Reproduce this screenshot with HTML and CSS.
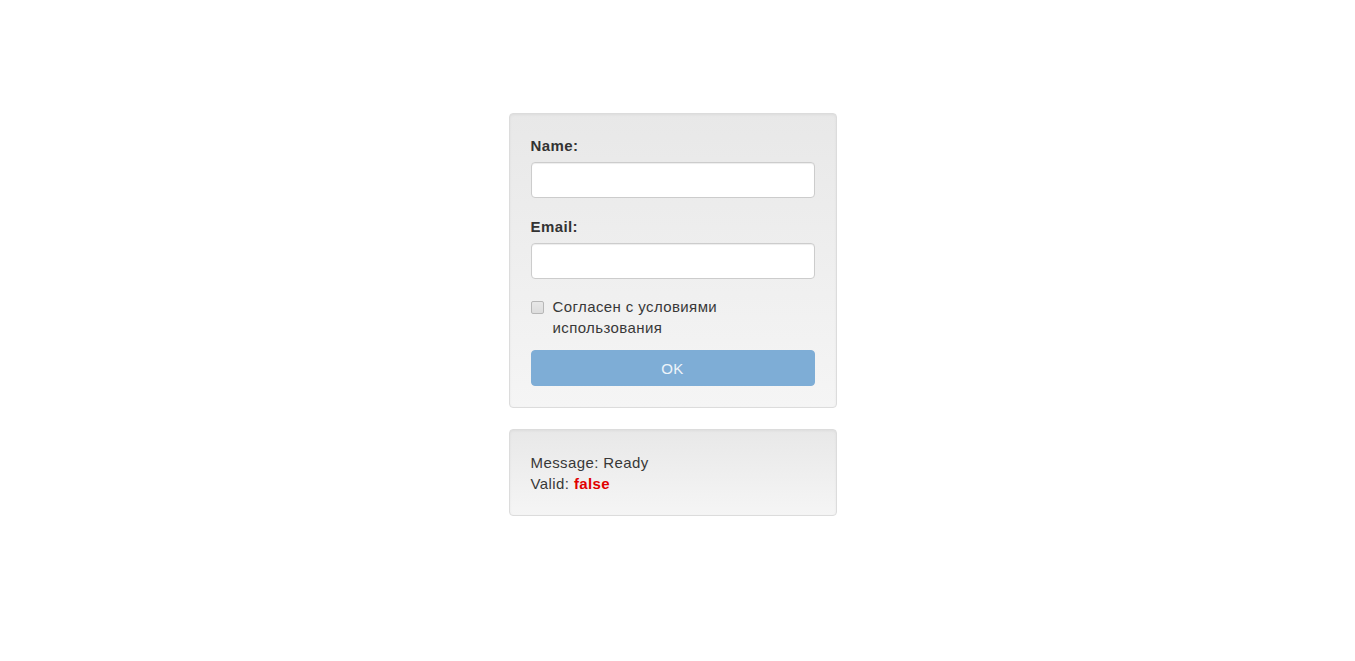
FILE: index.html
```html
<!DOCTYPE html>
<html lang="ru">
<head>
<meta charset="utf-8">
<title>Form</title>
<link rel="stylesheet" href="styles.css">
</head>
<body>
<div class="page">
  <div class="column">
    <form class="well form-well">
      <div class="form-group">
        <label class="label" for="name">Name:</label>
        <input class="input" id="name" type="text">
      </div>
      <div class="form-group form-group-last">
        <label class="label" for="email">Email:</label>
        <input class="input" id="email" type="text">
      </div>
      <div class="check-row">
        <span class="checkbox"></span>
        <span class="check-text">Согласен с условиями использования</span>
      </div>
      <button class="btn" type="button" disabled>OK</button>
    </form>
    <div class="well status-well">
      <div class="line">Message: Ready</div>
      <div class="line">Valid: <span class="invalid">false</span></div>
    </div>
  </div>
</div>
</body>
</html>
```

FILE: styles.css
```css
* { box-sizing: border-box; }
html, body { margin: 0; padding: 0; background: #fff; }
body {
  font-family: "Liberation Sans", Arial, sans-serif;
  font-size: 15px;
  line-height: 21px;
  color: #383838;
  letter-spacing: 0.4px;
}
.page {
  display: flex;
  justify-content: center;
  padding-top: 113px;
}
.column {
  width: 328px;
  margin-left: -10px;
  display: flex;
  flex-direction: column;
  gap: 21px;
}
.well {
  border: 1px solid #dcdcdc;
  border-radius: 4px;
  background: linear-gradient(to bottom, #e8e8e8 0, #f5f5f5 100%);
  box-shadow: inset 0 1px 3px rgba(0,0,0,.05), 0 1px 0 rgba(255,255,255,.1);
}
.form-well {
  margin: 0;
  padding: 21px 21px 21px 21px;
  display: flex;
  flex-direction: column;
}
.form-group {
  display: flex;
  flex-direction: column;
  margin-bottom: 18px;
}
.form-group-last {
  margin-bottom: 17px;
}
.label {
  font-weight: bold;
  line-height: 21px;
  margin-bottom: 6px;
  color: #333;
  letter-spacing: 0.4px;
}
.input {
  height: 36px;
  width: 100%;
  border: 1px solid #ccc;
  border-radius: 4px;
  background: #fff;
  box-shadow: inset 0 1px 1px rgba(0,0,0,.075);
  font: inherit;
  padding: 6px 12px;
  margin: 0;
}
.check-row {
  display: flex;
  align-items: flex-start;
  margin-bottom: 12px;
}
.checkbox {
  flex: none;
  width: 13px;
  height: 13px;
  margin: 5px 9px 0 0;
  border: 1px solid #a9a9a9;
  border-radius: 2px;
  background: linear-gradient(to bottom, #e6e6e6, #d8d8d8);
  opacity: 0.8;
}
.check-text {
  width: 200px;
}
.btn {
  height: 36px;
  width: 100%;
  border: 1px solid #7eadd6;
  border-radius: 4px;
  background: #7eadd6;
  color: #eef4fa;
  font-family: "Liberation Sans", Arial, sans-serif;
  font-size: 15px;
  letter-spacing: 0.4px;
  padding: 0;
  margin: 0;
  cursor: not-allowed;
}
.status-well {
  padding: 22px 21px 21px 21px;
}
.line {
  line-height: 21px;
}
.invalid {
  color: #e10000;
  font-weight: bold;
}
```
